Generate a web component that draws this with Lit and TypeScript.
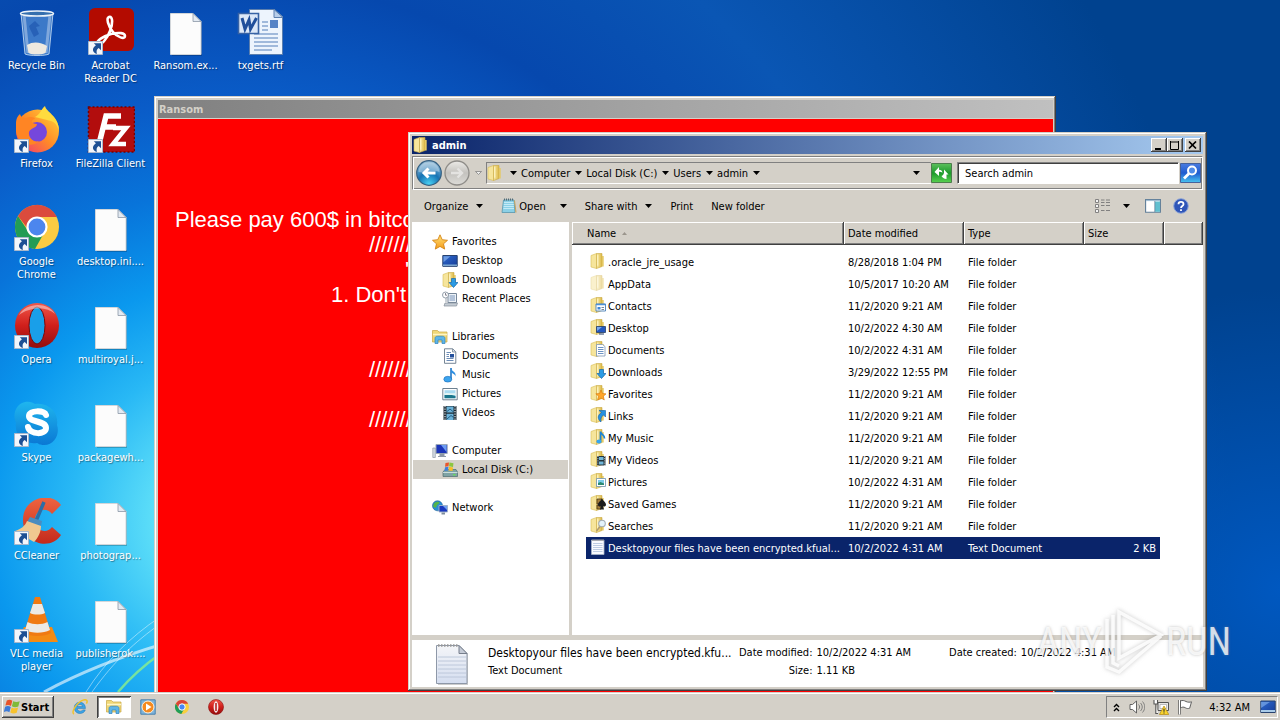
import { LitElement, html, svg, css } from "lit";
import { customElement, state } from "lit/decorators.js";
import { classMap } from "lit/directives/class-map.js";

const FOLDER = svg`
  <path d="M1 2.500 6.500.5v15L1 14z" fill="#f6e59c" stroke="#d9bd55" stroke-width=".6"/>
  <path d="M6.500.5H12v13L6.500 15.500z" fill="url(#gold)" stroke="#c9a83f" stroke-width=".6"/>
  <path d="M7.800 2.200v10.500" stroke="#fff8cf" stroke-width="1"/>
  <path d="M12 3h1.700v10.500H12z" fill="#e5c964"/>`;

const OVERLAYS: Record<string, unknown> = {
  plain: svg``,
  contacts: svg`<path d="M6 7h9.500v7H6z" fill="#fff" stroke="#4a7fb5" stroke-width=".9"/><path d="M6 7.500h9.500" stroke="#4a90d9" stroke-width="1.500"/><path d="M7.500 10h3v2.500h-3z" fill="#3a86d8"/><path d="M11.500 10.500H14M11.500 12.500H14" stroke="#789"/>`,
  desktop: svg`<path d="M6.500 7.500h9v6h-9z" fill="#2458c0" stroke="#263f66" stroke-width=".8"/><path d="M7 8h5l-5 4z" fill="#78a8ee"/><path d="M9 15h5" stroke="#4a5f80" stroke-width="1.200"/>`,
  documents: svg`<path d="M6.500 3.500h6l2.500 2v9.500H6.500z" fill="#fff" stroke="#7d96b3" stroke-width=".8"/><path d="M8 6.500h5.500M8 8.500h5.500M8 10.500h5.500M8 12.500h5.500" stroke="#5c87bd" stroke-width=".9"/>`,
  downloads: svg`<path d="M9.500 6.500h4v4H16l-4.500 5-4.500-5h2.500z" fill="#2c9be4" stroke="#1468ad" stroke-width=".7"/>`,
  favorites: svg`<path d="m11 5 1.500 3.500 3.700.3-2.900 2.400 1 3.800-3.300-2-3.300 2 1-3.800-2.900-2.400 3.700-.3z" fill="#ffa62b" stroke="#d8790c" stroke-width=".6"/>`,
  links: svg`<path d="M9 3.500h6.500V10l-2-2c-2.500 1.500-3 4-2.500 7-4-3-3.500-7 .5-9.500z" fill="#2590e0" stroke="#1263a8" stroke-width=".6"/>`,
  music: svg`<path d="M10.500 2.500v9M10.500 2.500c0 3 4.500 3 4 7" fill="none" stroke="#1b83d4" stroke-width="1.700"/><ellipse cx="9" cy="12.500" rx="2.600" ry="2" fill="#35a5ef"/>`,
  videos: svg`<path d="M7 5h8.500v9.500H7z" fill="#24343c"/><path d="M9 6h4.500v3H9zM9 10.500h4.500v3H9z" fill="#70b6d8"/><path d="M7.900 5v10M14.700 5v10" stroke="#fff" stroke-width=".8" stroke-dasharray="1 1.200"/>`,
  pictures: svg`<path d="M6.500 5.500h9v8h-9z" fill="#fff" stroke="#6f93ad" stroke-width=".8"/><path d="M8 7h6v5H8z" fill="#7ccbe8"/><path d="M8 12v-2l2.500-1L14 10.500V12z" fill="#2c8a72"/>`,
  games: svg`<path d="M7 4h5v5H7zM7 10h4v4H7z" fill="#a5803c" stroke="#493817" stroke-width=".8"/><path d="M12 3.500c1 2.500 4 3.500 4 6.200 0 1.800-2 2.300-3 1.300l1 3.500h-4l1-3.500c-1 1-3 .5-3-1.300C8 7 11 6 12 3.500z" fill="#1d1d1d"/>`,
  searches: svg`<path d="m6.500 14 3.500-4.500" stroke="#b09b70" stroke-width="1.600"/><circle cx="12" cy="6.500" r="3.300" fill="#e4f2fa" stroke="#a3adb5" stroke-width="1.100"/>`,
};

const folder = (kind: string) => svg`${FOLDER}${OVERLAYS[kind]}`;

const SMALL: Record<string, unknown> = {
  star: svg`<path d="m8 .8 2.200 4.900 5.300.6-4 3.500 1.200 5.300L8 12.400l-4.700 2.700 1.200-5.300-4-3.500 5.300-.6z" fill="url(#star)" stroke="#d58416" stroke-width=".9"/>`,
  monitor: svg`<path d="M.8 2.500h14.400v10.800H.8z" fill="url(#screen)" stroke="#27426f"/><path d="M1.500 3.200h7l-7 6z" fill="#87b4ee" opacity=".7"/><path d="M1 12.200h14" stroke="#8fb9d8" stroke-width="1.300"/>`,
  recent: svg`<path d="M6 2.500h8.500v9H6z" fill="#eef3f8" stroke="#76879a"/><path d="M7.500 5H13M7.500 7H13M7.500 9H13" stroke="#7894bb"/><path d="M3 12h12.500l-1 3H2z" fill="#c4ccd4" stroke="#848e99" stroke-width=".7"/><circle cx="3.500" cy="4" r="3" fill="#fff" stroke="#8894a0" stroke-width=".9"/><path d="M3.500 2v2.200H5" stroke="#556" fill="none" stroke-width=".7"/><path d="M4 7v4" stroke="#99a3ad"/>`,
  libraries: svg`<path d="M.5 3V1.500h5L7 3h8v10H.5z" fill="#f0d878" stroke="#c9a844" stroke-width=".7"/><path d="M1 5.500h14" stroke="#fff5c4" stroke-width="1.500"/><path d="M3 14.500V9.500c0-1.500 1-2.300 2.500-2.300h5c1.500 0 2.500.8 2.500 2.300v5h-3V11H6v3.500z" fill="#5db5e8" stroke="#2f83bd" stroke-width=".7"/>`,
  docs: svg`<path d="M2.500.8h8.300l3 3v11.500H2.500z" fill="#fff" stroke="#67788a" stroke-width=".9"/><path d="M10.500 1v3h3" fill="#d6e1ec" stroke="#67788a" stroke-width=".7"/><path d="M4.500 4.500H9M4.500 6.500H7M4.500 8.500H7M4.500 10.500h7M4.500 12.500h7" stroke="#5b7fae" stroke-width=".9"/><path d="M8 6h4v3.500H8z" fill="#234f9b"/>`,
  note: svg`<path d="M9 1v11" stroke="#2177c7" stroke-width="1.600"/><path d="M9 1c.5 3.800 5.500 3.500 4.500 8.500C13 6.500 9.500 6.500 9 5z" fill="#2d8ee0"/><ellipse cx="5.800" cy="12.200" rx="4" ry="2.900" fill="#3ca4ee" stroke="#1b6cb8" stroke-width=".6"/>`,
  picture: svg`<path d="M.8 2.500h14.400v11.300H.8z" fill="#fff" stroke="#5d7385" stroke-width=".9"/><path d="M2.500 4.200h11v8h-11z" fill="#a8daf0"/><path d="M2.500 12.200V9l3.500-1 7.500 2v2.200z" fill="#19758b"/><path d="M2.500 7.500c4-1.500 7 .5 11-.5v2h-11z" fill="#e2f4f3"/>`,
  film: svg`<path d="M1.500 1h13v14h-13z" fill="#1e2a33"/><path d="M4.500 1.500h7v6h-7zM4.500 8.700h7V15h-7z" fill="#6bb2d8"/><path d="M5 6.500 8 4l3.500 3M5 14l4-3.500 2.500 2" stroke="#235d82" fill="none"/><path d="M3 1v14M13 1v14" stroke="#dfe6ea" stroke-width="1.200" stroke-dasharray="1.300 1.200"/>`,
  computer: svg`<path d="M.8 5h2.500v9.500H.8z" fill="#d7dee5" stroke="#7f8b98" stroke-width=".6"/><path d="M4 1.500h11.200v9H4z" fill="#1c36b8" stroke="#9ba8b8"/><path d="M9 2h5.500v7z" fill="#6d9cf2"/><path d="M8 11h4v2H8zM6 13.500h8" fill="#8d98a6" stroke="#8d98a6"/>`,
  disk: svg`<path d="m1 10 2-2.500h11l1.500 2.500v4.500H1z" fill="#7fa3a4" stroke="#4e6b6e" stroke-width=".7"/><path d="M1 10.500h14.500" stroke="#c8dcdc"/><path d="M11 12.800h2.500" stroke="#65e055" stroke-width="1.300"/><path d="M3.500 1 7 .5l-.5 3.700-3.500.5z" fill="#e8562a"/><path d="m7.500.5 4 .8-.5 3.700-4-.8z" fill="#8cc63f"/><path d="M3 5.300 6.500 4.800 6 8.500l-3.500.5z" fill="#3f7fda"/><path d="m7 4.800 4 .8-.5 3.400-4-.5z" fill="#f9bd27"/>`,
  network: svg`<circle cx="5.500" cy="5.800" r="5" fill="#2a8ed4" stroke="#135a96" stroke-width=".6"/><path d="M2 3.500c2-2.500 5-2 5.500-1S4 5 4.500 6.500 2 8 1 6.500zM7 8c1.500-1 3 0 3 .5L7.500 10.500z" fill="#55b548"/><path d="M7 5.500h8.500V12H7z" fill="#1b38bf" stroke="#a3b3c7" stroke-width=".9"/><path d="M11 6h4v4z" fill="#709ff0"/><path d="M9.500 12.500h3.500v2H9.500z" fill="#7e8c9c"/>`,
  textfile: svg`<path d="M1.500 1h12.500v14.500H1.500z" fill="#f8faff" stroke="#a6b4c8" stroke-width=".8"/><path d="M3 4.500h9.500M3 6.500h9.500M3 8.500h9.500M3 10.500h9.500M3 12.500h9.500" stroke="#adc0dc" stroke-width=".8"/><path d="M2.500 1.200h11" stroke="#777" stroke-width="1.400" stroke-dasharray="1 1"/>`,
  notepad: svg`<path d="M2.500 2h10.500l1 12.500H1z" fill="#8bd0e6" stroke="#5796ad" stroke-width=".8"/><path d="M3 4.500h9.500M2.800 6.500h10M2.600 8.500h10.200M2.400 10.500h10.600" stroke="#c9edf7" stroke-width=".9"/><path d="M3 1.500h10" stroke="#536a74" stroke-width="1.800" stroke-dasharray="1 1"/><path d="M13.500 2.500 15 14.500" stroke="#c9a35a"/>`,
  ie: svg`<path d="M13.400 9.600H5.200c.3 2.900 4.300 3.300 5.500 1.300h2.600c-1.600 5.300-11 4.800-11-2.200 0-7.200 11.500-7.500 11.100.9zm-2.800-2C10.400 4.900 5.600 4.900 5.200 7.600z" fill="#3ba4e6" stroke="#1c72b5" stroke-width=".5"/><path d="M2 15C-1.500 13.500 5 3 11.700.9c3.700-.9 4 1.700 2.700 3.800" fill="none" stroke="#f0c22e" stroke-width="1.500"/>`,
  wmp: svg`<path d="M.8.8h14.400v14.400H.8z" fill="#7db4dc" stroke="#4b82ad"/><circle cx="8" cy="8" r="6" fill="#f58a1f" stroke="#fff2df"/><path d="m6 4.500 5.500 3.500L6 11.500z" fill="#fff"/>`,
  chrome: svg`<circle cx="8" cy="8" r="7" fill="#f8cf3e"/><path d="M1.900 4.500A7 7 0 0 0 7.300 15l3-5.300L5 9.700z" fill="#1f9d58"/><path d="M1.900 4.500A7 7 0 0 1 14.100 4.700H8L5 9.500z" fill="#db4437"/><circle cx="8" cy="8" r="3.200" fill="#4687f4" stroke="#fff" stroke-width="1"/>`,
  opera: svg`<ellipse cx="8" cy="8" rx="7.500" ry="7.500" fill="url(#red)" stroke="#8c0c0c" stroke-width=".6"/><ellipse cx="8" cy="8" rx="2.400" ry="5.700" fill="#f5eded"/><path d="M8 4v8" stroke="#b41616" stroke-width="1.500"/>`,
  flag: svg`<path d="M2.500 1v14.500" stroke="#555" stroke-width="2.600"/><path d="M2.500 1v14.500" stroke="#fff" stroke-width="1.200"/><path d="M3.500 2c2-1 3.500-.5 5.500.5s4 .8 5.500.3l-1.800 6.400c-1.500.5-3 .5-4.500-.5S5 8 3.500 9z" fill="#fff" stroke="#555" stroke-width=".9"/>`,
  sound: svg`<path d="M1 5.500h2.500L7.500 2v12l-4-3.500H1z" fill="#fff" stroke="#555" stroke-width=".9"/><path d="M9.500 5.500c1.500 1.500 1.500 3.500 0 5M11.500 4c2.300 2.500 2.300 5.500 0 8M13.500 2.500c3 3.500 3 7.500 0 11" fill="none" stroke="#777" stroke-width=".9"/>`,
  net: svg`<path d="M5 3.500h10.500v8H5z" fill="#e7e7e7" stroke="#555"/><path d="M7 5.500h6.500v4H7z" fill="#fff" stroke="#999" stroke-width=".6"/><path d="M1 1v4h3.500V1M2.800 5v9.500H5" fill="#fff" stroke="#555" stroke-width="1.100"/><path d="m11 7 4.800 8.500H6.500z" fill="#f9d32c" stroke="#b58a10" stroke-width=".7"/><path d="M11 9.700v3M11 13.500v1" stroke="#333" stroke-width="1.100"/>`,
  details: svg`<path d="M1.500 1.500h3v3h-3zM1.500 6.500h3v3h-3zM1.500 11.500h3v3h-3z" fill="#f4f4f4" stroke="#777" stroke-width=".9"/><path d="M7 2h3.500M12 2h4M7 4.500h3.500M12 4.500h4M7 7.500h3.500M12 7.500h4M7 12.500h3.500M12 12.500h4" stroke="#777" stroke-width=".9"/>`,
  pane: svg`<path d="M.6 1.500h14.800v12.800H.6z" fill="#fff" stroke="#5f7d97" stroke-width="1.100"/><path d="M1 2.500h14" stroke="#a3bed3" stroke-width="1.200"/><path d="M10 3.500h5v10.300h-5z" fill="#61bfcf"/><path d="M9.800 3v11" stroke="#5f7d97" stroke-width=".8"/>`,
  show: svg`<path d="M.8 2h14.400v11.500H.8z" fill="url(#screen)" stroke="#27426f"/><path d="M1 3h9l-9 6z" fill="#8ab5ee" opacity=".6"/><path d="M1 12h14" stroke="#a9cbe8" stroke-width="2"/>`,
  win: svg`<path d="M2.800 1.500C5 .3 6.700.6 8.300 1.700L7 6.900C5.300 5.800 3.400 5.600 1.400 6.600z" fill="#e8532a"/><path d="M9.200 2.200c2.200 1.100 4.200 1.100 6.500 0l-1.400 5.200c-2.200 1.100-4.300 1-6.400-.1z" fill="#7fba3a"/><path d="M1.100 7.700c2.100-1.100 4-.9 5.700.2l-1.400 5.300c-1.800-1.100-3.700-1.200-5.600-.2z" fill="#3d7bd8"/><path d="M7.700 8.500c2.100 1.100 4.200 1.100 6.400.1l-1.400 5.100c-2.100 1.100-4.200 1-6.400-.1z" fill="#f7c22d"/>`,
};

const icon = (body: unknown, cls = "i16") =>
  html`<svg class=${cls} viewBox="0 0 16 16" aria-hidden="true">${body}</svg>`;

const ARROW = html`<svg class="arrow" viewBox="0 0 7 4" aria-hidden="true"><path d="M0 0h7L3.500 4z"/></svg>`;

const SHORTCUT = svg`<path d="M1.500 33.500h14v13h-14z" fill="#f3f6fb" stroke="#a9b8cc"/><path d="M6.800 35.200h7.200v7l-2.300-2.200c-2 1-2.500 3.300-1.800 6-3.600-.8-6.200-5-1-8.700z" fill="#1d4f94"/>`;

const PAGE = svg`<path d="M10 7h22l8 8v33H10z" fill="#0003"/><path d="M8.500 5.500h22.500l8 8V46.500H8.500z" fill="#fcfcfc" stroke="#d2d6da"/><path d="M31 5.500v8h8z" fill="#e3eaf2" stroke="#8b97a6" stroke-width=".8"/>`;

const BIG: Record<string, unknown> = {
  bin: svg`<path d="M8 5h32l-4 41c-4 2-20 2-24 0z" fill="#7fb4e6" fill-opacity=".45" stroke="#d3e6f6" stroke-opacity=".8"/><path d="M11 7l4 38M37 7l-4 38" stroke="#fff" stroke-opacity=".35" stroke-width="3"/><path d="M14 37c6-4 14-3 20 1l-1.500 7c-5 2-13 2-17 0z" fill="#eee9df"/><path d="m16 18 6-5 5 5-4 1 3 7-5 3-4-8z" fill="#1b55ae" opacity=".65"/><ellipse cx="24" cy="5.500" rx="16.500" ry="2.600" fill="#356fae" stroke="#edf3f8" stroke-width="1.500"/>`,
  acrobat: svg`<rect x="2" y="0" width="45" height="43" rx="6" fill="#b30b00"/><path d="M22 9c4-1 4 7 1 14-3 8-9 15-12 13-3-3 6-8 13-10 8-2 14-1 14 2 0 4-8 1-12-4-5-6-7-14-4-15z" fill="none" stroke="#fff" stroke-width="2.600"/>${SHORTCUT}`,
  page: PAGE,
  word: svg`<path d="M12.500 1.500h25l8 7v38h-33z" fill="#edf4fd" stroke="#5c7fae"/><path d="M37 1.500v8h9z" fill="#b9cee9" stroke="#5c7fae"/><path d="M33 12h8v8h-8z" fill="#5583c6"/><path d="M17 26h24M17 30h24M17 34h24M17 38h24M17 42h18M25 14h6M25 18h6M25 22h6" stroke="#87a5cf" stroke-width="1.400"/><path d="M1.500 5.500h20v20h-20z" fill="#dce8f8" stroke="#3863a5" stroke-width="1.600"/><path d="m5 10 3 11 4-9 1.500 9 6-11" fill="none" stroke="#204f9b" stroke-width="3"/>`,
  firefox: svg`<circle cx="24.500" cy="25" r="21.500" fill="url(#fox)"/><path d="M22 11C27 9 28 3 32 0c1 6 14 10 14 25-2-7-5-9-8-10z" fill="#ffdb3e"/><circle cx="24" cy="26" r="10" fill="#7547dc"/><path d="M3 18C3 12 5 10 7 8c1 4 4 4 6 4 4-2 9-1 9 1-5 1-4 5 2 5 0 4-7 4-8 8-1 5 4 11 10 9-8 8-22 3-23-10z" fill="#ff8524"/>${SHORTCUT}`,
  filezilla: svg`<path d="M1.500 1h46v45h-46z" fill="#b20d0d" stroke="#700" stroke-width="1.500" stroke-dasharray="2 2"/><path d="M13 34 19 10h15M16 21h13" fill="none" stroke="#fff" stroke-width="5.500"/><path d="M26 22h13L26 38h13" fill="none" stroke="#fff" stroke-width="4.500"/>${SHORTCUT}`,
  chrome: svg`<circle cx="24" cy="23" r="22" fill="#fbcb43"/><path d="M5 12A22 22 0 0 0 22 45l9-16-16-2z" fill="#229c55"/><path d="M5 12A22 22 0 0 1 44 13H24l-9 12z" fill="#db4b3d"/><circle cx="24" cy="23" r="9.500" fill="#4c86ee" stroke="#fff" stroke-width="2.200"/>${SHORTCUT}`,
  opera: svg`<ellipse cx="24" cy="23.500" rx="22" ry="22.500" fill="url(#red)"/><ellipse cx="24" cy="23.500" rx="8" ry="18.500" fill="#199fe9" stroke="#7a0808" stroke-width="1"/><path d="M6 13C12 1 35-1 42 12 34 4 16 5 6 13z" fill="#fff" opacity=".45"/>${SHORTCUT}`,
  skype: svg`<path d="M12 2c5-1 8 1 10 2 14-2 24 9 22 21 3 8-2 20-13 20-4 0-5-1-7-2C11 45 1 35 3 23-1 14 3 4 12 2z" fill="url(#sky)"/><path d="M33 15c-2-5-17-5-17 1 0 7 17 4 17 12 0 7-16 7-18-1" fill="none" stroke="#fff" stroke-width="6" stroke-linecap="round"/>${SHORTCUT}`,
  ccleaner: svg`<path d="M48 7 39 16C33 8 22 12 22 22s11 15 17 7l9 8C39 52 11 48 10 23 9-1 39-7 48 7z" fill="url(#cc)"/><path d="m31 4-8 19" stroke="#2d6da5" stroke-width="3.500"/><path d="m17 19 12 4-1 5-14-4z" fill="#4a8cc0"/><path d="m14 23 14 5c0 6-3 12-7 16L2 33c6-2 10-5 12-10z" fill="#f0c890"/>${SHORTCUT}`,
  vlc: svg`<path d="m11 31-7 15h41l-6-15z" fill="#f38b14"/><path d="M22 1h5l11 36c-6 4-21 4-27 0z" fill="#f07a12"/><path d="M20 8h9l3 9c-4 2-11 2-15 0zM14.500 26c6 3 14 3 20 0l2.500 8c-7 3.500-18 3.500-25 0z" fill="#eceae6"/>${SHORTCUT}`,
};

interface Shortcut { label: string; icon: string; col: number; row: number }
const DESKTOP: Shortcut[] = [
  { label: "Recycle Bin", icon: "bin", col: 1, row: 1 },
  { label: "Firefox", icon: "firefox", col: 1, row: 2 },
  { label: "Google Chrome", icon: "chrome", col: 1, row: 3 },
  { label: "Opera", icon: "opera", col: 1, row: 4 },
  { label: "Skype", icon: "skype", col: 1, row: 5 },
  { label: "CCleaner", icon: "ccleaner", col: 1, row: 6 },
  { label: "VLC media player", icon: "vlc", col: 1, row: 7 },
  { label: "Acrobat Reader DC", icon: "acrobat", col: 2, row: 1 },
  { label: "FileZilla Client", icon: "filezilla", col: 2, row: 2 },
  { label: "desktop.ini....", icon: "page", col: 2, row: 3 },
  { label: "multiroyal.j...", icon: "page", col: 2, row: 4 },
  { label: "packagewh...", icon: "page", col: 2, row: 5 },
  { label: "photograp...", icon: "page", col: 2, row: 6 },
  { label: "publisherok....", icon: "page", col: 2, row: 7 },
  { label: "Ransom.ex...", icon: "page", col: 3, row: 1 },
  { label: "txgets.rtf", icon: "word", col: 4, row: 1 },
];

interface Place { label: string; icon: unknown; child?: boolean; current?: boolean }
const PLACES: Place[][] = [
  [
    { label: "Favorites", icon: SMALL.star },
    { label: "Desktop", icon: SMALL.monitor, child: true },
    { label: "Downloads", icon: folder("downloads"), child: true },
    { label: "Recent Places", icon: SMALL.recent, child: true },
  ],
  [
    { label: "Libraries", icon: SMALL.libraries },
    { label: "Documents", icon: SMALL.docs, child: true },
    { label: "Music", icon: SMALL.note, child: true },
    { label: "Pictures", icon: SMALL.picture, child: true },
    { label: "Videos", icon: SMALL.film, child: true },
  ],
  [
    { label: "Computer", icon: SMALL.computer },
    { label: "Local Disk (C:)", icon: SMALL.disk, child: true, current: true },
  ],
  [{ label: "Network", icon: SMALL.network }],
];

interface Entry { name: string; date: string; kind: string; size?: string; type?: string }
const FILES: Entry[] = [
  { name: ".oracle_jre_usage", date: "8/28/2018 1:04 PM", kind: "plain" },
  { name: "AppData", date: "10/5/2017 10:20 AM", kind: "faded" },
  { name: "Contacts", date: "11/2/2020 9:21 AM", kind: "contacts" },
  { name: "Desktop", date: "10/2/2022 4:30 AM", kind: "desktop" },
  { name: "Documents", date: "10/2/2022 4:31 AM", kind: "documents" },
  { name: "Downloads", date: "3/29/2022 12:55 PM", kind: "downloads" },
  { name: "Favorites", date: "11/2/2020 9:21 AM", kind: "favorites" },
  { name: "Links", date: "11/2/2020 9:21 AM", kind: "links" },
  { name: "My Music", date: "11/2/2020 9:21 AM", kind: "music" },
  { name: "My Videos", date: "11/2/2020 9:21 AM", kind: "videos" },
  { name: "Pictures", date: "10/2/2022 4:31 AM", kind: "pictures" },
  { name: "Saved Games", date: "11/2/2020 9:21 AM", kind: "games" },
  { name: "Searches", date: "11/2/2020 9:21 AM", kind: "searches" },
  { name: "Desktopyour files have been encrypted.kfual...", date: "10/2/2022 4:31 AM", kind: "text", type: "Text Document", size: "2 KB" },
];

@customElement("app-root")
export class AppRoot extends LitElement {
  @state() private selected = FILES.length - 1;

  static styles = css`
    :host {
      display: flex;
      flex-direction: column;
      height: 100vh;
      overflow: hidden;
      font: 11px/13px "DejaVu Sans Condensed", Tahoma, "Noto Sans", sans-serif;
      color: #000;
      --face: #d4d0c8;
    }
    * { box-sizing: border-box; }
    button { font: inherit; color: inherit; background: none; border: 0; padding: 0; margin: 0; }
    a { color: inherit; text-decoration: none; }
    svg { display: block; flex: none; }
    .defs { position: absolute; width: 0; height: 0; }
    .i16 { width: 16px; height: 16px; }
    .arrow { width: 7px; height: 4px; }
    .desktop {
      position: relative;
      flex: 1;
      min-height: 0;
      overflow: hidden;
      background:
        radial-gradient(ellipse 300px 300px at 100% 85%, #0058c0 0, #0058c000 100%),
        radial-gradient(circle at 230px 520px, #8af0fa 0, #5adcf8 80px, #28b8f5 160px, #0a98ee 240px, #0874da 330px, #0a5cc8 420px, #0648ae 540px, #0a56b4 700px, #00428f 1000px);
    }
    .rays { position: absolute; left: 0; bottom: 0; width: 160px; height: 130px; }
    .shortcuts {
      position: relative;
      display: grid;
      grid-template-columns: 73px repeat(3, 75px);
      grid-auto-rows: 98px;
      padding-top: 8px;
    }
    .shortcut {
      display: flex;
      flex-direction: column;
      align-items: center;
      justify-content: flex-start;
      gap: 3px;
      color: #fff;
      text-shadow: 1px 1px 1px #0006;
    }
    .shortcut span { padding: 0 1px; text-align: center; }
    .shortcut:focus-visible { outline: 1px dotted #fff; }
    .i48 { width: 48px; height: 48px; }
    .c1 { grid-column: 1; } .c2 { grid-column: 2; } .c3 { grid-column: 3; } .c4 { grid-column: 4; }
    .r1 { grid-row: 1; } .r2 { grid-row: 2; } .r3 { grid-row: 3; } .r4 { grid-row: 4; }
    .r5 { grid-row: 5; } .r6 { grid-row: 6; } .r7 { grid-row: 7; }
    .window {
      position: absolute;
      display: flex;
      flex-direction: column;
      padding: 4px;
      background: var(--face);
      box-shadow: inset -1px -1px #404040, inset 1px 1px #d4d0c8, inset -2px -2px #808080, inset 2px 2px #fff;
    }
    .titlebar {
      display: flex;
      align-items: center;
      height: 18px;
      font-weight: 700;
      flex: none;
    }
    .ransom { left: 154px; top: 96px; width: 902px; height: 640px; padding-right: 3px; }
    .ransom .titlebar { padding-left: 1px; color: var(--face); background: linear-gradient(90deg, #808080, #c0c0c0); }
    .note {
      flex: 1;
      margin-top: 1px;
      padding: 88px 0 0 17px;
      overflow: hidden;
      background: #f00;
      color: #fff;
      font: 22px/25px "Liberation Sans", Arial, sans-serif;
      white-space: nowrap;
    }
    .note p { margin: 0; height: 25px; }
    .note .slashes { padding-left: 194px; }
    .note .quote { padding-left: 230px; }
    .note .step { padding-left: 156px; }
    .explorer { left: 408px; top: 132px; width: 799px; height: 559px; }
    .explorer .titlebar {
      gap: 3px;
      padding: 0 2px 0 1px;
      color: #fff;
      background: linear-gradient(90deg, #0a246a, #a6caf0);
    }
    .explorer h1, .ransom h1 { margin: 0; flex: 1; font: inherit; }
    .controls { display: flex; }
    .control {
      display: grid;
      place-items: center;
      width: 16px;
      height: 14px;
      background: var(--face);
      box-shadow: inset -1px -1px #404040, inset 1px 1px #fff, inset -2px -2px #808080;
    }
    .control svg { width: 10px; height: 9px; fill: none; stroke: #000; }
    .close { margin-left: 2px; }
    .navbar {
      display: flex;
      align-items: center;
      height: 34px;
      margin-top: 2px;
      padding: 0 1px 0 2px;
      border: 1px solid #808080;
      border-right-color: #fff;
      border-bottom-color: #fff;
      box-shadow: inset 1px 1px #fff, inset -1px -1px #808080;
      flex: none;
    }
    .orb { width: 28px; height: 28px; }
    .orb svg { width: 28px; height: 28px; }
    .history { width: 15px; display: grid; place-items: center; }
    .address {
      display: flex;
      align-items: center;
      flex: 1;
      height: 22px;
      border: 1px solid #808080;
      border-right: 0;
      border-bottom-color: #fff;
    }
    .address .lead { padding: 0 7px 0 0; }
    .crumb { display: flex; align-items: center; gap: 5px; margin-left: 4px; }
    .address .more { margin-left: auto; padding: 8px 11px; }
    .refresh, .go { width: 21px; height: 22px; }
    .refresh svg, .go svg { width: 21px; height: 22px; }
    .search {
      width: 222px;
      height: 22px;
      margin: 0 1px 0 5px;
      padding: 0 7px;
      font: inherit;
      color: #000;
      background: #fff;
      border: 1px solid #808080;
      border-right-color: #fff;
      border-bottom-color: #fff;
      border-radius: 0;
      box-shadow: inset 1px 1px #404040;
      outline: 0;
    }
    .search::placeholder { color: #000; opacity: 1; }
    .toolbar {
      display: flex;
      align-items: center;
      gap: 18px;
      height: 32px;
      padding: 0 14px 0 12px;
      flex: none;
    }
    .toolbar button { display: flex; align-items: center; gap: 8px; }
    .toolbar .open span { margin: 0 6px 0 -6px; }
    .toolbar .push { margin-left: auto; gap: 13px; margin-right: -3px; }
    .toolbar .help { margin-left: -6px; }
    .body { display: flex; flex: 1; min-height: 0; background: #fff; }
    .places {
      width: 160px;
      padding: 10px 1px 0;
      border-right: 3px solid var(--face);
      flex: none;
    }
    .places ul { list-style: none; margin: 0 0 19px; padding: 0; }
    .place { display: flex; align-items: center; gap: 4px; height: 19px; padding-left: 19px; }
    .place.child { padding-left: 29px; }
    .place.current { background: var(--face); }
    .files { flex: 1; min-width: 0; display: block; }
    .files thead, .files tbody { display: block; }
    .files tr { display: grid; }
    .files th, .files td { padding: 0 5px; font-weight: 400; text-align: left; white-space: nowrap; }
    .files thead tr { grid-template-columns: 272px 120px 120px 80px 1fr; height: 23px; }
    .files th {
      display: flex;
      align-items: center;
      gap: 6px;
      background: var(--face);
      box-shadow: inset -1px -1px #404040, inset 1px 1px #fff, inset -2px -2px #808080;
    }
    .files th { padding-left: 4px; }
    .files th:first-child { padding-left: 15px; }
    .sort { width: 5px; height: 3px; fill: #9a958c; }
    .files tbody { padding: 6px 43px 0 14px; }
    .files tbody tr { grid-template-columns: 257px 120px 120px 1fr; height: 22px; }
    .files td { padding-top: 2px; line-height: 20px; }
    .files .name { display: flex; align-items: center; gap: 2px; padding-left: 4px; padding-right: 0; }
    .files .name svg { align-self: flex-start; }
    .files .size { text-align: right; padding-right: 4px; }
    .files .selected { background: #0a246a; color: #fff; }
    .faded { opacity: .5; }
    .details {
      display: grid;
      grid-template-columns: 37px auto auto auto;
      justify-content: start;
      align-items: start;
      height: 52px;
      padding: 4px 0 0 22px;
      border-top: 5px solid var(--face);
      background: #fff;
      flex: none;
    }
    .details > svg { width: 37px; height: 42px; }
    .details .file { margin: 0 0 0 17px; width: 251px; white-space: nowrap; }
    .details .file p { margin: 0; line-height: 18px; }
    .details .file .title { font-size: 12px; }
    .details dl {
      display: grid;
      grid-template-columns: auto auto;
      column-gap: 4px;
      margin: 0;
      line-height: 18px;
      white-space: nowrap;
    }
    .details dt { text-align: right; }
    .details dd { margin: 0; }
    .details .created { margin-left: 38px; }
    .mark {
      position: absolute;
      right: 49px;
      bottom: 16px;
      display: flex;
      align-items: center;
      gap: 2px;
      font: 400 38px/68px "Roboto Condensed", "Liberation Sans Narrow", "Open Sans Condensed", sans-serif;
      color: #fffc;
      text-shadow: 0 0 3px #8888;
      pointer-events: none;
    }
    .mark svg { width: 60px; height: 66px; filter: drop-shadow(0 0 2px #8888); }
    .taskbar {
      display: flex;
      align-items: center;
      height: 28px;
      padding: 2px 2px 0;
      background: var(--face);
      box-shadow: inset 0 1px #d4d0c8, inset 0 2px #fff;
      flex: none;
    }
    .start {
      display: flex;
      align-items: center;
      gap: 1px;
      height: 22px;
      width: 52px;
      padding-left: 2px;
      font-weight: 700;
      box-shadow: inset -1px -1px #404040, inset 1px 1px #fff, inset -2px -2px #808080;
    }
    .pinned { display: flex; margin-left: 9px; flex: 1; }
    .task { display: grid; place-items: center; width: 34px; height: 22px; }
    .task.active {
      background: #fff;
      box-shadow: inset 1px 1px #404040, inset -1px -1px #fff, inset 2px 2px #808080;
    }
    .tray {
      display: flex;
      align-items: center;
      gap: 8px;
      height: 22px;
      padding: 0 1px 0 6px;
      border: 1px solid #808080;
      border-right-color: #fff;
      border-bottom-color: #fff;
    }
    .tray time { padding: 0 2px 0 8px; }
    .chev { width: 7px; height: 9px; fill: none; stroke: #000; stroke-width: 1.4; margin-right: 1px; }
  `;

  private defs() {
    return html`<svg class="defs" aria-hidden="true"><defs>
      <linearGradient id="gold"><stop offset="0" stop-color="#f8e9a1"/><stop offset="1" stop-color="#dcb94a"/></linearGradient>
      <linearGradient id="star" x2="0" y2="1"><stop offset="0" stop-color="#ffe37a"/><stop offset="1" stop-color="#f59c1a"/></linearGradient>
      <linearGradient id="screen" x2="1" y2="1"><stop offset="0" stop-color="#2f6ad0"/><stop offset="1" stop-color="#163d98"/></linearGradient>
      <linearGradient id="red" x2="0" y2="1"><stop offset="0" stop-color="#f0574a"/><stop offset=".5" stop-color="#d01f1b"/><stop offset="1" stop-color="#930d0d"/></linearGradient>
      <linearGradient id="cc" x2="0" y2="1"><stop offset="0" stop-color="#ee6440"/><stop offset="1" stop-color="#c42a1c"/></linearGradient>
      <linearGradient id="sky" x2="0" y2="1"><stop offset="0" stop-color="#1fb6ee"/><stop offset="1" stop-color="#0a78d4"/></linearGradient>
      <linearGradient id="fox" x1="1" y1="0" x2="0" y2="1"><stop offset="0" stop-color="#ffd83a"/><stop offset=".5" stop-color="#ff8a28"/><stop offset="1" stop-color="#f0307a"/></linearGradient>
      <radialGradient id="orb" cx=".5" cy=".95" r=".9"><stop offset="0" stop-color="#4ad2f4"/><stop offset=".5" stop-color="#1673b4"/><stop offset="1" stop-color="#8fb8d4"/></radialGradient>
      <linearGradient id="dim" x2="0" y2="1"><stop offset="0" stop-color="#ecebe8"/><stop offset=".5" stop-color="#c4c2be"/><stop offset="1" stop-color="#dddcd8"/></linearGradient>
      <linearGradient id="green" x2="0" y2="1"><stop offset="0" stop-color="#5cc05c"/><stop offset=".5" stop-color="#1d9a2c"/><stop offset="1" stop-color="#58d050"/></linearGradient>
      <linearGradient id="blue" x2="0" y2="1"><stop offset="0" stop-color="#4a7ce0"/><stop offset=".5" stop-color="#1f5cd0"/><stop offset="1" stop-color="#48c4f0"/></linearGradient>
      <linearGradient id="paper" x2="0" y2="1"><stop offset="0" stop-color="#f4f5f8"/><stop offset="1" stop-color="#d5def0"/></linearGradient>
    </defs></svg>`;
  }

  private ransom() {
    return html`<section class="window ransom">
      <header class="titlebar"><h1>Ransom</h1></header>
      <div class="note">
        <p>Please pay 600$ in bitco</p>
        <p class="slashes">///////</p>
        <p class="quote">'</p>
        <p class="step">1. Don't</p>
        <p></p><p></p>
        <p class="slashes">///////</p>
        <p></p>
        <p class="slashes">///////</p>
      </div>
    </section>`;
  }

  private navbar() {
    return html`<nav class="navbar" aria-label="Address">
      <button class="orb" aria-label="Back"><svg viewBox="0 0 28 28"><circle cx="14" cy="14" r="12.300" fill="url(#orb)" stroke="#355f80" stroke-width="1.200"/><path d="M3.500 13C4 0 24 0 24.500 13 18 10 10 15 3.500 13z" fill="#fff" opacity=".35"/><path d="M20.500 14H9.500M13.500 9.500 9 14l4.500 4.500" fill="none" stroke="#fff" stroke-width="3"/></svg></button>
      <button class="orb" aria-label="Forward"><svg viewBox="0 0 28 28"><circle cx="14" cy="14" r="12" fill="url(#dim)" stroke="#8f8d89" stroke-width="1.300"/><path d="M8 14h11M14.500 9.500 19 14l-4.500 4.500" fill="none" stroke="#e4e3e1" stroke-width="2.400"/></svg></button>
      <button class="history" aria-label="Recent pages"><svg class="arrow" viewBox="0 0 7 4"><path d="M.5.5h6L3.500 3.500z" fill="#eee" stroke="#777" stroke-width=".7"/></svg></button>
      <div class="address">
        <span class="lead">${icon(folder("plain"))}</span>${ARROW}
        ${["Computer", "Local Disk (C:)", "Users", "admin"].map(
          (c) => html`<a class="crumb" href="#"><span>${c}</span>${ARROW}</a>`)}
        <button class="more" aria-label="Previous locations">${ARROW}</button>
      </div>
      <button class="refresh" aria-label="Refresh"><svg viewBox="0 0 21 22"><path d="M.5 1.500h20v19H.5z" fill="url(#green)" stroke="#4c7d4c"/><path d="M3.500 10 8 5v2.800c2 0 3.300 1 3.500 3-1-.8-2-1-3.500-1V14z" fill="#fff"/><path d="M17.500 12.500 13 7.500v3c-.3 2-1 3-2.500 3.500.5 1.500 2.500 3 5 3v-4.500z" fill="#fff"/></svg></button>
      <input class="search" type="text" aria-label="Search admin" placeholder="Search admin">
      <button class="go" aria-label="Search"><svg viewBox="0 0 21 22"><path d="M.5 1.500h20v19H.5z" fill="url(#blue)" stroke="#46629b"/><path d="m4 16.500 5-5" stroke="#fff" stroke-width="2.800"/><circle cx="12" cy="8.500" r="4" fill="#4f8be8" stroke="#fff" stroke-width="2"/></svg></button>
    </nav>`;
  }

  private toolbar() {
    return html`<div class="toolbar">
      <button>Organize ${ARROW}</button>
      <button class="open">${icon(SMALL.notepad)}<span>Open</span>${ARROW}</button>
      <button>Share with ${ARROW}</button>
      <button>Print</button>
      <button>New folder</button>
      <button class="push" aria-label="Change your view">${icon(SMALL.details)}${ARROW}</button>
      <button aria-label="Preview pane">${icon(SMALL.pane)}</button>
      <button class="help" aria-label="Help"><svg class="i16" viewBox="0 0 16 16"><circle cx="8" cy="8" r="7.300" fill="#2f55b8" stroke="#8fa6d8"/><path d="M5.500 6.200c0-3 5-3 5 0 0 1.800-2.500 1.800-2.500 3.800M8 11.300v1.700" fill="none" stroke="#fff" stroke-width="1.800"/></svg></button>
    </div>`;
  }

  private row(f: Entry, i: number) {
    const glyph = f.kind === "text" ? SMALL.textfile : folder(f.kind === "faded" ? "plain" : f.kind);
    return html`<tr class=${classMap({ selected: i === this.selected })} @click=${() => (this.selected = i)}>
      <td class="name">${icon(glyph, f.kind === "faded" ? "i16 faded" : "i16")}<span>${f.name}</span></td>
      <td>${f.date}</td>
      <td>${f.type ?? "File folder"}</td>
      <td class="size">${f.size ?? ""}</td>
    </tr>`;
  }

  private explorer() {
    return html`<section class="window explorer">
      <header class="titlebar">
        ${icon(folder("plain"))}<h1>admin</h1>
        <div class="controls">
          <button class="control" aria-label="Minimize"><svg viewBox="0 0 10 9"><path d="M1 8h6" stroke-width="2"/></svg></button>
          <button class="control" aria-label="Maximize"><svg viewBox="0 0 10 9"><path d="M.5 1h8M.5 0v8.500h8V0" stroke-width="1"/></svg></button>
          <button class="control close" aria-label="Close"><svg viewBox="0 0 10 9"><path d="m1 .5 7 7M8 .5l-7 7" stroke-width="1.700"/></svg></button>
        </div>
      </header>
      ${this.navbar()}
      ${this.toolbar()}
      <div class="body">
        <nav class="places" aria-label="Places">
          ${PLACES.map((group) => html`<ul>${group.map((p) => html`<li>
            <a href="#" class=${classMap({ place: true, child: !!p.child, current: !!p.current })}>${icon(p.icon)}<span>${p.label}</span></a>
          </li>`)}</ul>`)}
        </nav>
        <table class="files">
          <thead><tr>
            <th>Name <svg class="sort" viewBox="0 0 5 3"><path d="M0 3h5L2.500 0z"/></svg></th>
            <th>Date modified</th><th>Type</th><th>Size</th><th></th>
          </tr></thead>
          <tbody>${FILES.map((f, i) => this.row(f, i))}</tbody>
        </table>
      </div>
      <footer class="details">
        <svg viewBox="0 0 37 42"><path d="M4 3h23l7 7v31H4z" fill="#0003"/><path d="M2.500 1.500H25l8 8v30H2.500z" fill="url(#paper)" stroke="#8e98a8"/><path d="M25 1.500v8h8z" fill="#c5cbd6" stroke="#777f8c"/><path d="M4 13h28M4 17h28M4 21h28M4 25h28M4 29h28M4 33h28" stroke="#b9c4d8" stroke-width=".9"/><path d="M4 1.500h21" stroke="#999" stroke-width="2.500" stroke-dasharray="1.500 1.500"/></svg>
        <div class="file">
          <p class="title">Desktopyour files have been encrypted.kfu...</p>
          <p>Text Document</p>
        </div>
        <dl><dt>Date modified:</dt><dd>10/2/2022 4:31 AM</dd><dt>Size:</dt><dd>1.11 KB</dd></dl>
        <dl class="created"><dt>Date created:</dt><dd>10/2/2022 4:31 AM</dd></dl>
      </footer>
    </section>`;
  }

  render() {
    return html`
      ${this.defs()}
      <main class="desktop">
        <svg class="rays" viewBox="0 0 160 130" fill="none" stroke="#fff" aria-hidden="true">
          <path d="M44 130C85 108 120 95 160 83" stroke-width="3" opacity=".6"/>
          <path d="M86 130C105 100 130 75 160 55M92 130C115 98 135 80 160 62" opacity=".45"/>
          <path d="M118 130c12-14 25-26 42-38" stroke="#8df08a" stroke-width="2.500" opacity=".8"/>
        </svg>
        <div class="shortcuts">
          ${DESKTOP.map((s) => html`<button class="shortcut c${s.col} r${s.row}">
            <svg class="i48" viewBox="0 0 48 48" aria-hidden="true">${BIG[s.icon]}</svg><span>${s.label}</span>
          </button>`)}
        </div>
        ${this.ransom()}
        ${this.explorer()}
        <div class="mark"><span>ANY</span><svg viewBox="0 0 60 66" fill="none" stroke="#ffffffd9" stroke-width="3.500"><path d="M15 3v46l42-23zM3 10v48l12 5 42-36M9 6v48l6 3"/></svg><span>RUN</span></div>
      </main>
      <footer class="taskbar">
        <button class="start">${icon(SMALL.win)}Start</button>
        <div class="pinned">
          <button class="task" aria-label="Internet Explorer">${icon(SMALL.ie)}</button>
          <button class="task active" aria-label="Windows Explorer">${icon(SMALL.libraries)}</button>
          <button class="task" aria-label="Media Player">${icon(SMALL.wmp)}</button>
          <button class="task" aria-label="Chrome">${icon(SMALL.chrome)}</button>
          <button class="task" aria-label="Opera">${icon(SMALL.opera)}</button>
        </div>
        <div class="tray">
          <svg class="chev" viewBox="0 0 7 9" aria-hidden="true"><path d="m1 4 2.500-2.500L6 4M1 8l2.500-2.500L6 8"/></svg>
          ${icon(SMALL.sound)}${icon(SMALL.net)}${icon(SMALL.flag)}
          <time>4:32 AM</time>
          ${icon(SMALL.show)}
        </div>
      </footer>`;
  }
}
